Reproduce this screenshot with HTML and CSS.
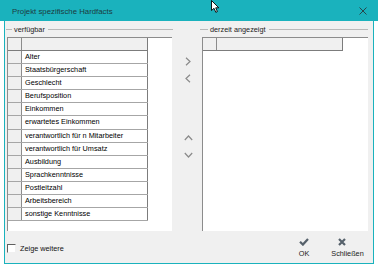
FILE: index.html
```html
<!DOCTYPE html>
<html lang="de">
<head>
  <meta charset="UTF-8">
  <title>Projekt spezifische Hardfacts</title>
  <link rel="stylesheet" href="styles.css">
</head>
<body>

  <div class="window">
    <!-- Title bar -->
    <div class="titlebar">
      <span class="title">Projekt spezifische Hardfacts</span>
      <svg class="close" width="8" height="8" viewBox="0 0 8 8"><path d="M0.5 0.5L7.5 7.5M7.5 0.5L0.5 7.5" stroke="#27474b" stroke-width="1" fill="none"/></svg>
    </div>

    <div class="frame">
      <div class="panels">

        <!-- available fields -->
        <div class="group group-left">
          <div class="legend"><span class="lead"></span><span class="legend-text">verfügbar</span><span class="rule"></span></div>
          <div class="listbox">
            <div class="grid">
              <div class="row head"><div class="rh"></div><div class="cell"></div></div>
              <div class="row"><div class="rh"></div><div class="cell">Alter</div></div>
              <div class="row"><div class="rh"></div><div class="cell">Staatsbürgerschaft</div></div>
              <div class="row"><div class="rh"></div><div class="cell">Geschlecht</div></div>
              <div class="row"><div class="rh"></div><div class="cell">Berufsposition</div></div>
              <div class="row"><div class="rh"></div><div class="cell">Einkommen</div></div>
              <div class="row"><div class="rh"></div><div class="cell">erwartetes Einkommen</div></div>
              <div class="row"><div class="rh"></div><div class="cell">verantwortlich für n Mitarbeiter</div></div>
              <div class="row"><div class="rh"></div><div class="cell">verantwortlich für Umsatz</div></div>
              <div class="row"><div class="rh"></div><div class="cell">Ausbildung</div></div>
              <div class="row"><div class="rh"></div><div class="cell">Sprachkenntnisse</div></div>
              <div class="row"><div class="rh"></div><div class="cell">Postleitzahl</div></div>
              <div class="row"><div class="rh"></div><div class="cell">Arbeitsbereich</div></div>
              <div class="row"><div class="rh"></div><div class="cell">sonstige Kenntnisse</div></div>
            </div>
          </div>
        </div>

        <!-- move buttons -->
        <div class="movers">
          <svg class="mv mv-right" width="6" height="9" viewBox="0 0 6 9"><path d="M1 0.8L5 4.5L1 8.2" stroke="#8a8a8a" stroke-width="1.2" fill="none"/></svg>
          <svg class="mv mv-left" width="6" height="9" viewBox="0 0 6 9"><path d="M5 0.8L1 4.5L5 8.2" stroke="#8a8a8a" stroke-width="1.2" fill="none"/></svg>
          <svg class="mv mv-up" width="9" height="6" viewBox="0 0 9 6"><path d="M0.8 5L4.5 1L8.2 5" stroke="#8a8a8a" stroke-width="1.2" fill="none"/></svg>
          <svg class="mv mv-down" width="9" height="6" viewBox="0 0 9 6"><path d="M0.8 1L4.5 5L8.2 1" stroke="#8a8a8a" stroke-width="1.2" fill="none"/></svg>
        </div>

        <!-- currently shown fields -->
        <div class="group group-right">
          <div class="legend"><span class="lead lead-right"></span><span class="legend-text">derzeit angezeigt</span><span class="rule"></span></div>
          <div class="listbox listbox-right">
            <div class="grid">
              <div class="row head"><div class="rh"></div><div class="cell"></div></div>
            </div>
          </div>
        </div>

      </div>

      <div class="footer">
        <label class="check"><span class="box"></span>Zeige weitere</label>
        <div class="buttons">
          <div class="btn btn-ok">
            <svg width="10" height="8" viewBox="0 0 10 8"><path d="M1 3.8L3.9 6.6L9 1" stroke="#56616b" stroke-width="2.2" fill="none"/></svg>
            <span>OK</span>
          </div>
          <div class="btn btn-close">
            <svg width="8" height="8" viewBox="0 0 8 8"><path d="M1 1L7 7M7 1L1 7" stroke="#56616b" stroke-width="2.2" fill="none"/></svg>
            <span>Schließen</span>
          </div>
        </div>
      </div>
    </div>
  </div>

  <!-- mouse pointer from the capture -->
  <svg class="cursor" width="9" height="13" viewBox="0 0 9 13"><path d="M0.5 0.5L0.5 10.5L3 8.3L4.8 12.3L6.4 11.6L4.7 7.8L7.8 7.8Z" fill="#fff" stroke="#000" stroke-width="0.9"/></svg>

</body>
</html>
```

FILE: styles.css
```css
* {
  box-sizing: border-box;
}

body {
  margin: 0;
  background-color: #fff;
  font-family: "Liberation Sans", Arial, sans-serif;
  font-size: 7.3px;
  color: #000;
}

.window {
  margin-left: 4px;
  width: 370px;
}

.titlebar {
  height: 21px;
  margin: 0 -4px;
  background-color: #1ab2bd;
  display: flex;
  align-items: center;
  justify-content: space-between;
  padding: 1px 11px 0 12px;
}

.title {
  font-size: 7.8px;
  color: #1d3a3e;
}

.frame {
  height: 243px;
  background-color: #f0f0f0;
  border: 1px solid #1ab2bd;
  border-top: none;
  display: flex;
  flex-direction: column;
}

.panels {
  display: flex;
  padding: 2px 0 0 1px;
}

.group-left {
  width: 167px;
}

.group-right {
  width: 168px;
}

.legend {
  height: 12px;
  display: flex;
  align-items: center;
}

.lead, .rule {
  height: 1px;
  background-color: #b9b9b9;
}

.lead {
  width: 6px;
}

.lead-right {
  width: 8px;
}

.rule {
  flex: 1;
}

.legend-text {
  padding: 0 3px 0 2px;
  color: #222;
}

.listbox {
  margin: 2px 0 0 1px;
  width: 165px;
  height: 194px;
  background-color: #fff;
  border-top: 1px solid #8c8c8c;
  border-left: 1px solid #8c8c8c;
}

.listbox-right {
  margin-left: 2px;
  width: 166px;
}

.grid {
  width: 140px;
}

.row {
  display: flex;
  height: 13.1px;
  border-bottom: 1px solid #a6a6a6;
}

.row.head {
  height: 13px;
  border-bottom-color: #7c7c7c;
  background-color: #f0f0f0;
}

.rh {
  width: 14px;
  background-color: #f0f0f0;
  border-right: 1px solid #8c8c8c;
}

.cell {
  width: 126px;
  padding-left: 3px;
  line-height: 12px;
  white-space: nowrap;
  overflow: hidden;
  border-right: 1px solid #7c7c7c;
}

.movers {
  width: 27px;
  display: flex;
  flex-direction: column;
  align-items: center;
  padding-left: 3px;
}

.mv-right {
  margin-top: 34px;
}

.mv-left {
  margin-top: 8px;
}

.mv-up {
  margin-top: 52px;
}

.mv-down {
  margin-top: 11px;
}

.footer {
  flex: 1;
  display: flex;
  align-items: flex-start;
  padding: 0 8px 0 2px;
}

.check {
  display: flex;
  align-items: center;
  margin-top: 13px;
  color: #111;
}

.box {
  width: 9px;
  height: 9px;
  margin-right: 4px;
  background-color: #fff;
  border-top: 1px solid #606060;
  border-left: 1px solid #606060;
  border-right: 1px solid #f0f0f0;
  border-bottom: 1px solid #f0f0f0;
}

.buttons {
  margin-left: auto;
  display: flex;
  gap: 14px;
  margin-top: 7px;
}

.btn {
  display: flex;
  flex-direction: column;
  align-items: center;
  color: #222;
  line-height: 9px;
}

.btn svg {
  margin-bottom: 3px;
}

.btn-ok {
  width: 24px;
}

.btn-close {
  width: 35px;
}

.btn-close svg {
  margin-right: 12px;
}

.cursor {
  position: absolute;
  left: 211px;
  top: 0;
}
```
